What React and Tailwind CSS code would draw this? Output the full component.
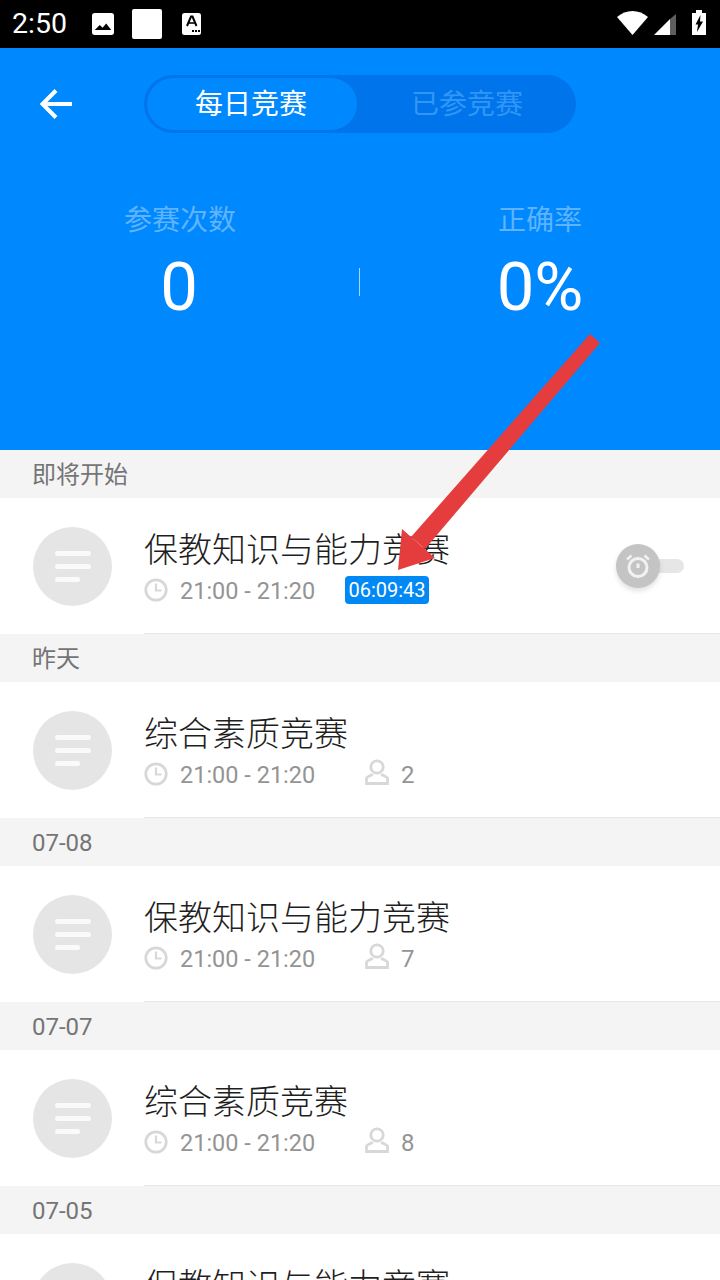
const CJK = "font-['Roboto','Noto_Sans_CJK_SC',sans-serif]";

function MenuBadge() {
  return (
    <div className="w-[79px] h-[79px] rounded-full bg-[#e5e5e5] flex flex-col justify-center items-start pl-[22px] gap-[8px] shrink-0">
      <div className="w-[36px] h-[5px] rounded-full bg-[#fafafa]" />
      <div className="w-[36px] h-[5px] rounded-full bg-[#fafafa]" />
      <div className="w-[25px] h-[5px] rounded-full bg-[#fafafa]" />
    </div>
  );
}

function Clock() {
  return (
    <svg width="24" height="24" viewBox="0 0 24 24" fill="none" stroke="#d8d8d8" strokeWidth="2.8" className="shrink-0 -mt-[4px]">
      <circle cx="12" cy="12" r="10.2" />
      <path d="M12 5.5V12.5H17.5" strokeWidth="2.2" />
    </svg>
  );
}

function Person() {
  return (
    <svg width="26" height="26" viewBox="0 0 26 26" fill="none" stroke="#d8d8d8" strokeWidth="2.8" className="shrink-0">
      <circle cx="13" cy="8" r="6.2" />
      <path d="M8.5 15C7.5 17 3 17 2.5 19V24.5H23.5V19C23 17 18.5 17 17.5 15" />
    </svg>
  );
}

function Row({ label, title, count, countdown }) {
  return (
    <section>
      <div className="h-[48px] bg-[#f4f4f5] pl-[32px] pt-[1px] flex items-center text-[24px] text-[#757575]">{label}</div>
      <div className="h-[136px] bg-white flex items-center pl-[33px] relative">
        <MenuBadge />
        <div className="ml-[32px] flex-1 self-stretch border-b border-[#e8e8e8] flex flex-col pt-[28px]">
          <div className="text-[34px] leading-[48px] text-[#1f1f1f] font-light">{title}</div>
          <div className="flex items-center h-[32px] mt-[2px] text-[23.5px] text-[#949494]">
            <Clock />
            <span className="ml-[12px] w-[165px]">21:00 - 21:20</span>
            {countdown ? (
              <span className="w-[84px] h-[28px] -mt-[4px] rounded-[4px] bg-[#0088f5] text-white text-[20px] flex items-center justify-center">{countdown}</span>
            ) : (
              <>
                <span className="ml-[19px] -mt-[8px]"><Person /></span>
                <span className="ml-[11px] -mt-[3px] text-[24px]">{count}</span>
              </>
            )}
          </div>
        </div>
        {countdown && (
          <div className="absolute left-[616px] top-[46px] w-[68px] h-[44px] flex items-center">
            <div className="absolute left-[20px] w-[48px] h-[14px] rounded-full bg-[#e6e6e6]" />
            <div className="absolute left-0 w-[44px] h-[44px] rounded-full bg-[#c4c4c4] shadow-[0_3px_5px_rgba(0,0,0,0.12)] flex items-center justify-center">
              <svg width="28" height="28" viewBox="0 0 28 28" fill="none" stroke="#f2f2f2">
                <circle cx="14" cy="15.5" r="9" strokeWidth="3" />
                <path d="M14 11.5V16" strokeWidth="3" />
                <path d="M3 7.5L7.5 3.5M25 7.5L20.5 3.5" strokeWidth="2.5" />
              </svg>
            </div>
          </div>
        )}
      </div>
    </section>
  );
}

export default function App() {
  return (
    <div className={`relative w-[720px] h-[1280px] overflow-hidden bg-white ${CJK}`}>
      {/* Android status bar */}
      <div className="h-[48px] bg-black flex items-center pl-[12px] text-white">
        <span className="text-[28.5px] w-[80px] font-normal">2:50</span>
        <svg width="22" height="22" viewBox="0 0 24 24" className="mr-[18px]">
          <path fill="#fff" fillRule="evenodd" d="M3 0H21A3 3 0 0 1 24 3V21A3 3 0 0 1 21 24H3A3 3 0 0 1 0 21V3A3 3 0 0 1 3 0ZM3 18.5H21L15.5 11.5L11.5 16L8.5 13Z" />
        </svg>
        <div className="w-[30px] h-[30px] bg-white rounded-[2px] mr-[20px]" />
        <svg width="19" height="22" viewBox="0 0 19 22">
          <rect width="19" height="22" rx="2.5" fill="#fff" />
          <path d="M5 13L9 3.5H10.5L14.5 13" fill="none" stroke="#000" strokeWidth="2" />
          <path d="M6.5 10H13" stroke="#000" strokeWidth="1.6" />
          <path d="M10 18H12M13 18H15M16 18H18" stroke="#000" strokeWidth="2" />
        </svg>
        <svg width="120" height="48" viewBox="600 0 120 48" className="ml-auto">
          <path fill="#fff" d="M617 17C626 9 639 9 648 17L632.5 35Z" />
          <path fill="#fff" d="M654 35L670 19V35Z" />
          <path fill="#5f5f5f" d="M670 19L676 14V35H670Z" />
          <path fill="#fff" fillRule="evenodd" d="M692 13H696V10H702V13H706V35H692ZM700.5 15L695.5 24.5H698L697 32L703 21.5H700Z" />
        </svg>
      </div>

      {/* Header with tabs and stats */}
      <header className="h-[402px] bg-[#0088ff] pt-[27px]">
        <div className="flex items-center h-[58px]">
          <svg width="36" height="32" viewBox="0 0 36 32" fill="none" stroke="#fff" strokeWidth="4" className="ml-[39px]">
            <path d="M33 16H4M17 2.5L3.5 16L17 29.5" />
          </svg>
          <div className="ml-[69px] w-[432px] h-[58px] rounded-full bg-[#0074ea] flex items-center p-[3px]">
            <div className="w-[210px] h-[52px] rounded-full bg-[#0088ff] flex items-center justify-center text-[28px] text-white pt-[2px] pr-[2px]">每日竞赛</div>
            <div className="w-[216px] pl-[4px] text-center text-[28px] text-[#3097f8] pt-[2px]">已参竞赛</div>
          </div>
        </div>
        <div className="flex mt-[66px] relative">
          <div className="w-[360px] flex flex-col items-center">
            <div className="text-[28px] leading-[40px] mt-[2px] text-[#5fb3ff]">参赛次数</div>
            <div className="text-[67px] leading-[78px] text-white mt-[7px] -ml-[2px]">0</div>
          </div>
          <div className="w-[360px] flex flex-col items-center">
            <div className="text-[28px] leading-[40px] mt-[2px] text-[#5fb3ff]">正确率</div>
            <div className="text-[67px] leading-[78px] text-white mt-[7px]">0%</div>
          </div>
          <div className="absolute left-[359px] top-[69px] w-[1px] h-[28px] bg-[#a8d6ff]" />
        </div>
      </header>

      <Row label="即将开始" title="保教知识与能力竞赛" countdown="06:09:43" />
      <Row label="昨天" title="综合素质竞赛" count="2" />
      <Row label="07-08" title="保教知识与能力竞赛" count="7" />
      <Row label="07-07" title="综合素质竞赛" count="8" />
      <Row label="07-05" title="保教知识与能力竞赛" count="3" />

      {/* Red callout arrow */}
      <svg className="absolute left-0 top-0 pointer-events-none" width="720" height="1280">
        <path fill="#e53d3d" d="M590 334L600 343L425 549L411 537Z" />
        <path fill="#e53d3d" d="M402 529L435 558L398 570Z" />
      </svg>
    </div>
  );
}
